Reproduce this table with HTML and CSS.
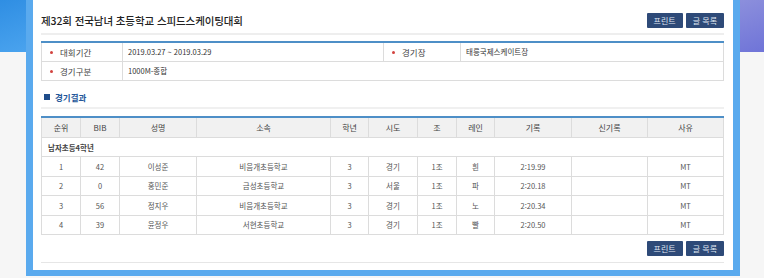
FILE: index.html
```html
<!DOCTYPE html>
<html lang="ko">
<head>
<meta charset="utf-8">
<title>경기결과</title>
<link rel="stylesheet" href="styles.css">
</head>
<body>
<div class="page">
  <div class="side side-left"></div>
  <div class="frame">
    <div class="head">
      <h1 class="title">제32회 전국남녀 초등학교 스피드스케이팅대회</h1>
      <div class="btns">
        <a class="btn">프린트</a>
        <a class="btn">글 목록</a>
      </div>
    </div>
    <table class="info">
      <colgroup><col class="c1"><col class="c2"><col class="c3"><col class="c4"></colgroup>
      <tr>
        <th><span class="dot"></span>대회기간</th>
        <td>2019.03.27 ~ 2019.03.29</td>
        <th><span class="dot"></span>경기장</th>
        <td>태릉국제스케이트장</td>
      </tr>
      <tr>
        <th><span class="dot"></span>경기구분</th>
        <td colspan="3">1000M-종합</td>
      </tr>
    </table>
    <h2 class="sec"><span class="sq"></span>경기결과</h2>
    <table class="res">
      <colgroup>
        <col style="width:39px"><col style="width:39px"><col style="width:77px"><col style="width:134px">
        <col style="width:38px"><col style="width:49px"><col style="width:39px"><col style="width:38px">
        <col style="width:77px"><col style="width:76px"><col style="width:76px">
      </colgroup>
      <thead>
        <tr><th>순위</th><th>BIB</th><th>성명</th><th>소속</th><th>학년</th><th>시도</th><th>조</th><th>레인</th><th>기록</th><th>신기록</th><th>사유</th></tr>
      </thead>
      <tbody>
        <tr class="grp"><td colspan="11">남자초등4학년</td></tr>
        <tr><td>1</td><td>42</td><td>이성준</td><td>비음개초등학교</td><td>3</td><td>경기</td><td>1조</td><td>흰</td><td>2:19.99</td><td></td><td>MT</td></tr>
        <tr><td>2</td><td>0</td><td>홍민준</td><td>금성초등학교</td><td>3</td><td>서울</td><td>1조</td><td>파</td><td>2:20.18</td><td></td><td>MT</td></tr>
        <tr><td>3</td><td>56</td><td>정지우</td><td>비음개초등학교</td><td>3</td><td>경기</td><td>1조</td><td>노</td><td>2:20.34</td><td></td><td>MT</td></tr>
        <tr><td>4</td><td>39</td><td>윤정우</td><td>서현초등학교</td><td>3</td><td>경기</td><td>1조</td><td>빨</td><td>2:20.50</td><td></td><td>MT</td></tr>
      </tbody>
    </table>
    <div class="foot">
      <a class="btn">프린트</a>
      <a class="btn">글 목록</a>
    </div>
  </div>
  <div class="side side-right"></div>
</div>
</body>
</html>
```
FILE: styles.css
```css
* { box-sizing: border-box; }
html, body { margin: 0; padding: 0; }
body {
  width: 764px;
  height: 278px;
  overflow: hidden;
  background: #f6f6f6;
  font-family: "Noto Sans CJK KR", "Noto Sans", sans-serif;
  color: #333;
}
.page {
  display: flex;
  height: 278px;
}
.side {
  flex: none;
  height: 278px;
  background-repeat: no-repeat;
  background-size: 100% 52px;
}
.side-left {
  width: 26px;
  background-image: linear-gradient(160deg, #2f8ee3 0%, #4aa3ee 100%);
}
.side-right {
  width: 24px;
  background-image: linear-gradient(160deg, #8c8fdc 0%, #6f74d8 100%);
}
.frame {
  flex: none;
  width: 714px;
  height: 276px;
  background: #fff;
  border-left: 7px solid #5aaaee;
  border-right: 7px solid #5aaaee;
  border-bottom: 6px solid #5aaaee;
  padding: 0 9px 0 8px;
}
.head {
  display: flex;
  align-items: center;
  justify-content: space-between;
  height: 35px;
  padding-top: 7px;
  border-bottom: 2px solid #eeeeee;
}
.title {
  margin: 0;
  font-size: 10.5px;
  font-weight: 500;
  color: #222;
  letter-spacing: -0.1px;
}
.btns, .foot {
  display: flex;
  gap: 3px;
}
.btn {
  display: inline-block;
  height: 15px;
  line-height: 15px;
  padding: 0 7px;
  background: #2e4a78;
  color: #dfe6f2;
  font-size: 8px;
  border-radius: 1px;
}
.info {
  margin-top: 6px;
  width: 683px;
  border-collapse: collapse;
  border-top: 2px solid #4e8fc7;
  font-size: 7.5px;
}
.info .c1 { width: 81px; }
.info .c2 { width: 261px; }
.info .c3 { width: 77px; }
.info th, .info td {
  height: 19px;
  border-bottom: 1px solid #dcdcdc;
  padding: 0;
  text-align: left;
}
.info th {
  font-weight: 400;
  color: #444;
  font-size: 8.5px;
  padding-left: 8px;
  border-right: 1px solid #dcdcdc;
}
.info tr:first-child td:nth-child(2) { border-right: 1px solid #dcdcdc; }
.info td { padding-left: 5px; color: #333; }
.info tr th:first-child { border-left: 1px solid #dcdcdc; }
.info tr td:last-child { border-right: 1px solid #dcdcdc; }
.dot {
  display: inline-block;
  width: 3px;
  height: 3px;
  border-radius: 50%;
  background: #d2433e;
  vertical-align: middle;
  margin: -1px 7px 0 0;
}
.sec {
  margin: 10px 0 0;
  padding: 0 0 3px 3px;
  height: 18px;
  border-bottom: 2px solid #f0f0f0;
  font-size: 8.5px;
  font-weight: 700;
  color: #24579a;
  display: flex;
  align-items: center;
}
.sq {
  display: inline-block;
  width: 6px;
  height: 6px;
  background: #1f4c8a;
  margin-right: 5px;
}
.res {
  margin-top: 7px;
  width: 683px;
  border-collapse: collapse;
  table-layout: fixed;
  border-top: 2px solid #4e8fc7;
  font-size: 7.5px;
}
.res th, .res td {
  border: 1px solid #dcdcdc;
  text-align: center;
  padding: 0;
  color: #555;
}
.res th {
  height: 21px;
  background: #f1f1f1;
  font-weight: 400;
  font-size: 8px;
  color: #444;
}
.res td { height: 19.4px; }
.res .grp td {
  text-align: left;
  padding-left: 6px;
  font-weight: 700;
  color: #444;
}
.foot {
  justify-content: flex-end;
  align-items: center;
  height: 28px;
  padding-top: 1px;
  border-bottom: 1px solid #e6e6e6;
}
```
